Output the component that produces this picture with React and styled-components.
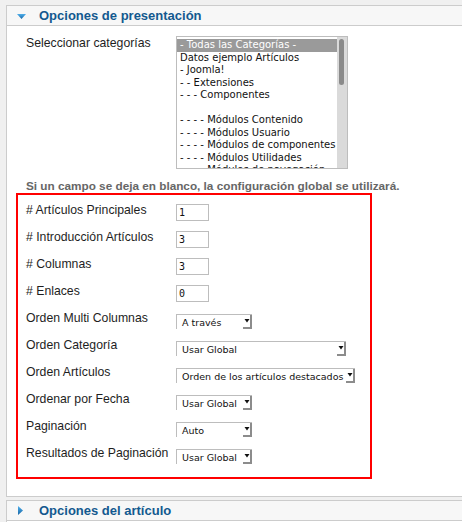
import React from "react";
import styled, { createGlobalStyle } from "styled-components";

const categories = [
  "- Todas las Categorías -",
  "Datos ejemplo Artículos",
  "- Joomla!",
  "- - Extensiones",
  "- - - Componentes",
  "",
  "- - - - Módulos Contenido",
  "- - - - Módulos Usuario",
  "- - - - Módulos de componentes",
  "- - - - Módulos Utilidades",
  "- - - - Módulos de navegación",
];

const fields = [
  { label: "# Artículos Principales", kind: "text", value: "1" },
  { label: "# Introducción Artículos", kind: "text", value: "3" },
  { label: "# Columnas", kind: "text", value: "3" },
  { label: "# Enlaces", kind: "text", value: "0" },
  { label: "Orden Multi Columnas", kind: "select", value: "A través", width: 76 },
  { label: "Orden Categoría", kind: "select", value: "Usar Global", width: 170 },
  {
    label: "Orden Artículos",
    kind: "select",
    value: "Orden de los artículos destacados",
    width: 179,
  },
  { label: "Ordenar por Fecha", kind: "select", value: "Usar Global", width: 76 },
  { label: "Paginación", kind: "select", value: "Auto", width: 76 },
  { label: "Resultados de Paginación", kind: "select", value: "Usar Global", width: 76 },
];

const Caret = ({ open }) => (
  <svg width="16" height="19" viewBox="0 0 16 19">
    <defs>
      <linearGradient id={open ? "cd" : "cr"} x1="0" y1="0" x2="0" y2="1">
        <stop offset="0" stopColor="#4fb0ec" />
        <stop offset="1" stopColor="#1766a6" />
      </linearGradient>
    </defs>
    {open ? (
      <polygon points="0,8 9,8 4.5,13" fill="url(#cd)" />
    ) : (
      <polygon points="1,5 6,9.5 1,14" fill="url(#cr)" />
    )}
  </svg>
);

const SelectArrow = () => (
  <svg width="9" height="14" viewBox="0 0 9 14">
    <rect x="7" y="0" width="2" height="14" fill="#8c8c8c" />
    <rect x="0" y="12" width="9" height="2" fill="#8c8c8c" />
    <polygon points="1.5,4 6.5,4 4,7.5" fill="#111" />
  </svg>
);

export default function App() {
  return (
    <Page>
      <GlobalStyle />
      <Panel>
        <PanelHeader>
          <Caret open />
          <Title>Opciones de presentación</Title>
        </PanelHeader>
        <PanelBody>
          <FieldRow>
            <Label>Seleccionar categorías</Label>
            <ListBox>
              <Options>
                {categories.map((c, i) => (
                  <Option key={i} $selected={i === 0}>
                    {c}
                  </Option>
                ))}
              </Options>
              <ScrollTrack>
                <ScrollThumb />
              </ScrollTrack>
            </ListBox>
          </FieldRow>
          <Note>Si un campo se deja en blanco, la configuración global se utilizará.</Note>
          <Marked>
            {fields.map((f, i) => (
              <FieldRow key={i} $compact>
                <Label $compact>{f.label}</Label>
                {f.kind === "text" ? (
                  <TextBox>{f.value}</TextBox>
                ) : (
                  <SelectBox style={{ width: f.width }}>
                    <SelectValue>{f.value}</SelectValue>
                    <SelectArrow />
                  </SelectBox>
                )}
              </FieldRow>
            ))}
          </Marked>
        </PanelBody>
      </Panel>
      <Panel $gap>
        <PanelHeader>
          <Caret />
          <Title>Opciones del artículo</Title>
        </PanelHeader>
        <PanelBody style={{ height: 40 }} />
      </Panel>
    </Page>
  );
}

const GlobalStyle = createGlobalStyle`
  html, body {
    margin: 0;
    background: #f0f0f0;
    overflow: hidden;
  }
  body {
    font-family: "Liberation Sans", Arial, sans-serif;
  }
`;

const Page = styled.div`
  padding: 5px 0 0 6px;
  width: 456px;
  overflow: hidden;
`;

const Panel = styled.div`
  width: 480px;
  border: 1px solid #cccccc;
  background: #ffffff;
  margin-top: ${({ $gap }) => ($gap ? "3px" : "0")};
`;

const PanelHeader = styled.div`
  display: flex;
  align-items: center;
  height: 19px;
  padding-left: 10px;
  background: #f7f7f7;
  border-bottom: 1px solid #cccccc;
`;

const Title = styled.span`
  margin-left: 6px;
  font-size: 13px;
  font-weight: bold;
  line-height: 19px;
  color: #13598f;
`;

const PanelBody = styled.div`
  padding: 10px 0 17px 19px;
`;

const FieldRow = styled.div`
  display: flex;
  align-items: flex-start;
  height: ${({ $compact }) => ($compact ? "27px" : "auto")};
`;

const Label = styled.div`
  min-width: 150px;
  box-sizing: border-box;
  padding-right: 5px;
  font-size: 12.25px;
  line-height: ${({ $compact }) => ($compact ? "15px" : "14px")};
  color: #1e1e1e;
  white-space: nowrap;
`;

const ListBox = styled.div`
  display: flex;
  width: 172px;
  height: 133px;
  box-sizing: border-box;
  border: 1px solid #bdbdbd;
  background: #ffffff;
  overflow: hidden;
`;

const Options = styled.div`
  flex: 1;
  padding-top: 2px;
  overflow: hidden;
`;

const Option = styled.div`
  height: 12.5px;
  line-height: 12.5px;
  padding-left: 3px;
  font-family: "DejaVu Sans", Verdana, sans-serif;
  font-size: 10px;
  white-space: nowrap;
  color: ${({ $selected }) => ($selected ? "#ffffff" : "#111111")};
  background: ${({ $selected }) => ($selected ? "#9a9a9a" : "transparent")};
`;

const ScrollTrack = styled.div`
  width: 10px;
  background: #dadada;
  padding: 2px 0 0 2px;
  box-sizing: border-box;
`;

const ScrollThumb = styled.div`
  width: 5px;
  height: 46px;
  border-radius: 3px;
  background: #8a8a8a;
`;

const Note = styled.div`
  margin-top: 10px;
  font-size: 11.75px;
  line-height: 14px;
  font-weight: bold;
  color: #666666;
`;

const Marked = styled.div`
  width: 356px;
  box-sizing: border-box;
  margin-left: -10px;
  padding: 8px 8px 4px 8px;
  border: 2px solid #ff0000;
`;

const TextBox = styled.div`
  width: 33px;
  height: 17px;
  box-sizing: border-box;
  margin-top: 1px;
  padding-left: 2px;
  border: 1px solid #bdbdbd;
  background: #ffffff;
  font-family: "DejaVu Sans Mono", monospace;
  font-size: 10px;
  line-height: 15px;
  color: #111111;
`;

const SelectBox = styled.div`
  display: flex;
  align-items: center;
  height: 15px;
  box-sizing: border-box;
  margin-top: 3px;
  border: 1px solid #bdbdbd;
  border-right: none;
  border-bottom: none;
  background: #ffffff;
`;

const SelectValue = styled.span`
  flex: 1;
  padding-left: 5px;
  font-family: "DejaVu Sans", Verdana, sans-serif;
  font-size: 9.5px;
  line-height: 13px;
  color: #111111;
  white-space: nowrap;
  overflow: hidden;
`;
